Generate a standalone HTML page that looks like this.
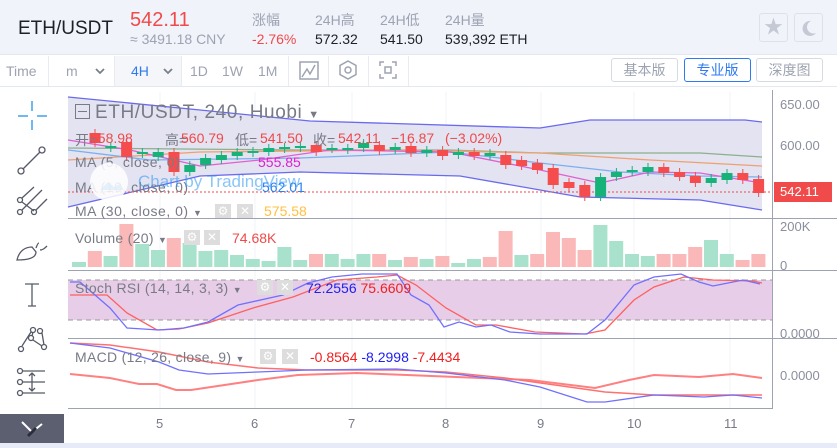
<!DOCTYPE html>
<html><head><meta charset="utf-8"><style>
*{margin:0;padding:0;box-sizing:border-box}
body{width:837px;height:448px;overflow:hidden;background:#fff;font-family:"Liberation Sans","Noto Sans CJK SC",sans-serif;position:relative}
.a{position:absolute;white-space:nowrap}
.g{color:#9ea3b2}
.r{color:#f04a4a}
.o{position:absolute;top:130px;font-size:14px;white-space:nowrap}
</style></head><body>
<div class="a" style="left:0;top:0;width:837px;height:55px;background:#f0f3fa;border-bottom:1px solid #e3e7f0"></div>
<div class="a" style="left:18px;top:18px;font-size:19px;color:#1e2026">ETH/USDT</div>
<div class="a" style="left:130px;top:9px;font-size:20px;color:#f04a4a">542.11</div>
<div class="a g" style="left:130px;top:31px;font-size:14px">≈ 3491.18 CNY</div>
<div class="a g" style="left:252px;top:10px;font-size:14px">涨幅</div>
<div class="a" style="left:252px;top:31px;font-size:14px;color:#f04a4a">-2.76%</div>
<div class="a g" style="left:315px;top:10px;font-size:14px">24H高</div>
<div class="a" style="left:315px;top:31px;font-size:14px;color:#1e2026">572.32</div>
<div class="a g" style="left:380px;top:10px;font-size:14px">24H低</div>
<div class="a" style="left:380px;top:31px;font-size:14px;color:#1e2026">541.50</div>
<div class="a g" style="left:445px;top:10px;font-size:14px">24H量</div>
<div class="a" style="left:445px;top:31px;font-size:14px;color:#1e2026">539,392 ETH</div>
<div class="a" style="left:759px;top:13px;width:29px;height:29px;border:1px solid #dde1ea;border-radius:3px;color:#c5c9d3;font-size:19px;text-align:center;line-height:27px">★</div>
<div class="a" style="left:794px;top:13px;width:29px;height:29px;border:1px solid #dde1ea;border-radius:3px"><svg width="27" height="27"><path d="M16 7a7.5 7.5 0 1 0 5 12a6.5 6.5 0 0 1 -5 -12z" fill="#c5c9d3"/></svg></div>

<div class="a" style="left:0;top:56px;width:837px;height:31px;border-bottom:1px solid #e3e7f0"></div>
<div class="a" style="left:114px;top:56px;width:67px;height:30px;background:#f4f6fa"></div>
<div class="a g" style="left:6px;top:63px;font-size:14px">Time</div>
<div class="a g" style="left:66px;top:63px;font-size:14px">m</div>
<div class="a" style="left:131px;top:63px;font-size:14px;color:#2e7bf0">4H</div>
<div class="a g" style="left:190px;top:63px;font-size:14px">1D</div>
<div class="a g" style="left:222px;top:63px;font-size:14px">1W</div>
<div class="a g" style="left:258px;top:63px;font-size:14px">1M</div>
<svg class="a" style="left:0;top:56px" width="420" height="31">
<g stroke="#e8ebf1"><line x1="48.5" y1="0" x2="48.5" y2="30"/><line x1="114.5" y1="0" x2="114.5" y2="30"/><line x1="181.5" y1="0" x2="181.5" y2="30"/><line x1="288.5" y1="0" x2="288.5" y2="30"/><line x1="328.5" y1="0" x2="328.5" y2="30"/><line x1="368.5" y1="0" x2="368.5" y2="30"/><line x1="408.5" y1="0" x2="408.5" y2="30"/></g>
<g fill="none" stroke="#7a7f8c" stroke-width="1.8"><path d="M96 13l4 4 4-4"/><path d="M164 13l4 4 4-4"/></g>
<g fill="none" stroke="#9ea3b2" stroke-width="1.5"><rect x="300" y="6" width="18" height="17"/><path d="M302 21l5-8 3 5 5-9"/>
<path d="M348 5l8 4.5v9l-8 4.5-8-4.5v-9z"/><circle cx="348" cy="14" r="3"/>
<path d="M380 10v-4h4M392 6h4v4M396 18v4h-4M384 22h-4v-4"/><rect x="385" y="11" width="6" height="6"/></g>
</svg>
<div class="a" style="left:611px;top:58px;width:67px;height:24px;border:1px solid #d6dae3;border-radius:3px;font-size:14px;color:#9ea3b2;text-align:center;line-height:22px">基本版</div>
<div class="a" style="left:684px;top:58px;width:67px;height:24px;border:1px solid #2e7bf0;border-radius:3px;font-size:14px;color:#2e7bf0;text-align:center;line-height:22px">专业版</div>
<div class="a" style="left:756px;top:58px;width:67px;height:24px;border:1px solid #d6dae3;border-radius:3px;font-size:14px;color:#9ea3b2;text-align:center;line-height:22px">深度图</div>

<svg class="a" style="left:0;top:88px" width="66" height="360">
<g stroke="#3ea0f0" stroke-width="1.5"><path d="M32 13v10M32 32v10M18 28h10M37 28h10"/></g>
<g fill="none" stroke="#555a66" stroke-width="1.3">
<circle cx="21" cy="83" r="3"/><circle cx="42" cy="62" r="3"/><path d="M23 81l17-17"/>
<circle cx="20" cy="112" r="2.5"/><circle cx="20" cy="124" r="2.5"/><circle cx="34" cy="124" r="2.5"/><path d="M22 110l12-11M22 122l20-20M36 122l11-11M22 114l12 9"/>
<path d="M17 172c2-9 8-13 15-13l4 5c0 5-5 8-19 8z"/><path d="M36 160c1-3 2-5 3-5M40 162c3 0 5-2 7-4"/>
<path d="M25 196h14M32 196v22M28 218h8"/>
<circle cx="33" cy="242" r="2.5"/><circle cx="40" cy="243" r="2.5"/><circle cx="31" cy="250" r="2.5"/><circle cx="21" cy="261" r="2.5"/><circle cx="44" cy="259" r="2.5"/><path d="M22 258l9-14M33 252l9 6M42 245l2 12M33 244l-1 4"/>
<circle cx="20" cy="283" r="2.5"/><circle cx="20" cy="294" r="2.5"/><circle cx="20" cy="305" r="2.5"/><path d="M23 283h22M23 294h22M23 305h22M32 285v18M29 288l3-3 3 3M29 300l3 3 3-3"/></g>
<rect x="0" y="326" width="64" height="29" fill="#5b5f70"/>
<path d="M22 334l10 10 10-8" stroke="#fff" stroke-width="2" fill="none"/>
<path d="M28 348l8-8" stroke="#2a2e3b" stroke-width="3"/>
</svg>
<div class="a" style="left:0;top:443px;width:837px;height:5px;background:#e6ebf7"></div>

<svg id="c" class="a" style="left:0;top:0" width="837" height="443"></svg>

<div class="a" style="left:75px;top:102px;font-size:19px;color:#787b86;letter-spacing:0.6px"><span style="display:inline-block;width:15px;height:15px;border:1.5px solid #787b86;vertical-align:-1px;position:relative;margin-right:5px"><span style="position:absolute;left:2px;right:2px;top:5.5px;height:1.5px;background:#787b86"></span></span>ETH/USDT, 240, Huobi <span style="font-size:11px">▼</span></div>
<div class="o" style="left:75px;color:#787b86">开=</div><div class="o r" style="left:90px">558.98</div>
<div class="o" style="left:165px;color:#787b86">高=</div><div class="o r" style="left:181px">560.79</div>
<div class="o" style="left:235px;color:#787b86">低=</div><div class="o r" style="left:260px">541.50</div>
<div class="o" style="left:313px;color:#787b86">收=</div><div class="o r" style="left:338px">542.11</div>
<div class="o r" style="left:391px">−16.87</div><div class="o r" style="left:445px">(−3.02%)</div>
<div class="a" style="left:75px;top:154px;font-size:14px;color:#787b86;letter-spacing:0.5px">MA (5, close, 0)</div>
<div class="a" style="left:258px;top:154px;font-size:14px;color:#e020d0">555.85</div>
<div class="a" style="left:75px;top:179px;font-size:14px;color:#787b86;letter-spacing:0.5px">MA (10, close, 0)</div>
<div class="a" style="left:262px;top:179px;font-size:14px;color:#2e80f0">562.01</div>
<div class="a" style="left:75px;top:203px;font-size:14px;color:#787b86;letter-spacing:0.5px">MA (30, close, 0) <span style="font-size:9px">▼</span></div>
<div class="a" style="left:264px;top:203px;font-size:14px;color:#ffc040">575.58</div>
<div class="a" style="left:215px;top:204px;width:16px;height:14px;background:#ddd;color:#fff;font-size:12px;text-align:center;line-height:14px">⚙</div>
<div class="a" style="left:237px;top:204px;width:16px;height:14px;background:#ddd;color:#fff;font-size:12px;text-align:center;line-height:14px">✕</div>
<div class="a" style="left:90px;top:163px;width:38px;height:38px;border-radius:50%;background:rgba(255,255,255,.85)"></div>
<div class="a" style="left:138px;top:172px;font-size:17px;color:rgba(40,150,240,.55)">Chart by TradingView</div>
<div class="a" style="left:75px;top:230px;font-size:14px;color:#787b86;letter-spacing:0.3px">Volume (20) <span style="font-size:9px">▼</span></div>
<div class="a" style="left:184px;top:230px;width:16px;height:15px;background:#ddd;color:#fff;font-size:12px;text-align:center">⚙</div>
<div class="a" style="left:204px;top:230px;width:16px;height:15px;background:#ddd;color:#fff;font-size:12px;text-align:center">✕</div>
<div class="a" style="left:232px;top:230px;font-size:14px;color:#f04a4a">74.68K</div>
<div class="a" style="left:75px;top:280px;font-size:14px;color:#787b86;letter-spacing:0.3px">Stoch RSI (14, 14, 3, 3) <span style="font-size:9px">▼</span></div>
<div class="a" style="left:257px;top:280px;width:16px;height:15px;background:#ddd;color:#fff;font-size:12px;text-align:center">⚙</div>
<div class="a" style="left:277px;top:280px;width:16px;height:15px;background:#ddd;color:#fff;font-size:12px;text-align:center">✕</div>
<div class="a" style="left:306px;top:280px;font-size:14px;color:#2020f0">72.2556 <span style="color:#f02020">75.6609</span></div>
<div class="a" style="left:75px;top:349px;font-size:14px;color:#787b86;letter-spacing:0.3px">MACD (12, 26, close, 9) <span style="font-size:9px">▼</span></div>
<div class="a" style="left:260px;top:349px;width:16px;height:15px;background:#ddd;color:#fff;font-size:12px;text-align:center">⚙</div>
<div class="a" style="left:282px;top:349px;width:16px;height:15px;background:#ddd;color:#fff;font-size:12px;text-align:center">✕</div>
<div class="a" style="left:310px;top:349px;font-size:14px;color:#f02020">-0.8564 <span style="color:#2020f0">-8.2998</span> -7.4434</div>

<div class="a" style="left:780px;top:97px;font-size:13px;color:#8a8f9e">650.00</div>
<div class="a" style="left:780px;top:138px;font-size:13px;color:#8a8f9e">600.00</div>
<div class="a" style="left:774px;top:182px;width:58px;height:20px;background:#f04a4a;color:#fff;font-size:13px;line-height:20px;padding-left:6px">542.11</div>
<div class="a" style="left:780px;top:219px;font-size:13px;color:#8a8f9e">200K</div>
<div class="a" style="left:780px;top:258px;font-size:13px;color:#8a8f9e">0</div>
<div class="a" style="left:780px;top:326px;font-size:13px;color:#8a8f9e">0.0000</div>
<div class="a" style="left:780px;top:368px;font-size:13px;color:#8a8f9e">0.0000</div>
<div class="a" style="left:156px;top:416px;font-size:13px;color:#787b86">5</div>
<div class="a" style="left:251px;top:416px;font-size:13px;color:#787b86">6</div>
<div class="a" style="left:348px;top:416px;font-size:13px;color:#787b86">7</div>
<div class="a" style="left:442px;top:416px;font-size:13px;color:#787b86">8</div>
<div class="a" style="left:537px;top:416px;font-size:13px;color:#787b86">9</div>
<div class="a" style="left:627px;top:416px;font-size:13px;color:#787b86">10</div>
<div class="a" style="left:724px;top:416px;font-size:13px;color:#787b86">11</div>

<script>
var s='';
function L(p,c,w,extra){s+='<polyline fill="none" stroke="'+c+'" stroke-width="'+(w||1.3)+'" '+(extra||'')+' points="'+p+'"/>';}
for(var x of [160,255,352,446,541,634,730]) s+='<line x1="'+x+'" y1="92" x2="'+x+'" y2="408" stroke="#f2f3f6"/>';
var up=[[68,97],[200,110],[310,121],[540,128],[590,120],[745,120],[762,122]];
var lo=[[762,210],[700,200],[580,197],[460,176],[300,172],[200,176],[68,207]];
s+='<polygon fill="#e3e3f2" points="'+up.concat(lo).map(p=>p.join(',')).join(' ')+'"/>';
L(up.map(p=>p.join(',')).join(' '),'#6a6aee',1.3);
L(lo.map(p=>p.join(',')).join(' '),'#6a6aee',1.3);
L('68,148 300,150 450,150 540,153 700,153 762,157','#8cb08c',1.3);
L('68,160 200,152 400,150 540,153 650,160 762,166','#f0a070',1.3);
L('68,150 150,160 300,158 450,152 540,163 620,172 700,176 762,177','#7ab0f0',1.3);
L('68,140 130,150 200,166 260,160 330,150 450,152 540,170 600,183 650,172 700,173 762,183','#e060d0',1.3);
s+='<line x1="68" y1="192" x2="772" y2="192" stroke="#f04a4a" stroke-dasharray="2,2"/>';
var C=[[133,143,0],[146,148,1],[142,157,0],[152,154,1],[152,157,1],[152,172,0],[165,172,1],[158,165,1],[155,160,1],[152,156,1],[151,153,1],[148,152,1],[147,149,1],[146,148,1],[145,152,0],[148,149,1],[148,150,1],[143,148,1],[145,151,0],[147,150,1],[146,153,0],[150,153,1],[150,156,0],[152,155,1],[152,156,0],[153,156,1],[155,165,0],[160,166,0],[163,170,0],[168,185,0],[182,188,0],[185,197,0],[177,197,1],[172,177,1],[170,172,1],[167,172,1],[167,173,0],[172,177,0],[176,183,0],[178,183,1],[173,180,1],[173,180,0],[179,193,0]];
C.forEach(function(c,i){var x=95+i*15.8,col=c[2]?'#16b27a':'#f54d4d';
s+='<line x1="'+x+'" y1="'+(c[0]-4)+'" x2="'+x+'" y2="'+(c[1]+4)+'" stroke="'+col+'"/>';
s+='<rect x="'+(x-5.5)+'" y="'+c[0]+'" width="11" height="'+Math.max(2,c[1]-c[0])+'" fill="'+col+'"/>';});
s+='<line x1="68" y1="218.5" x2="837" y2="218.5" stroke="#9ea3b2"/><line x1="68" y1="270.5" x2="837" y2="270.5" stroke="#9ea3b2"/><line x1="68" y1="338.5" x2="837" y2="338.5" stroke="#9ea3b2"/><line x1="68" y1="408.5" x2="772" y2="408.5" stroke="#9ea3b2"/><line x1="772.5" y1="90" x2="772.5" y2="409" stroke="#9ea3b2"/>';
var V=[[5,1],[16,0],[11,1],[43,0],[23,1],[17,1],[29,0],[24,1],[16,1],[17,1],[12,1],[8,1],[6,1],[20,1],[7,1],[13,0],[13,1],[8,1],[13,1],[13,0],[7,1],[10,0],[8,1],[11,0],[4,1],[8,1],[10,0],[36,0],[12,1],[13,0],[35,0],[29,0],[17,0],[42,1],[26,1],[13,1],[11,1],[13,0],[13,0],[20,0],[27,1],[13,1],[7,0],[13,0]];
V.forEach(function(v,i){var x=79+i*15.8;s+='<rect x="'+(x-7)+'" y="'+(267-v[0])+'" width="14" height="'+v[0]+'" fill="'+(v[1]?'#a8e2cd':'#fbb8b8')+'"/>';});
s+='<rect x="68" y="280" width="704" height="40" fill="#e8cde8"/>';
s+='<line x1="68" y1="280" x2="772" y2="280" stroke="#999" stroke-dasharray="5,4"/><line x1="68" y1="320" x2="772" y2="320" stroke="#999" stroke-dasharray="5,4"/>';
L('70,295 107,295 127,313 157,330 179,329 208,323 253,308 293,297 337,280 377,277 397,275 416,285 446,308 476,325 496,325 535,332 585,334 605,330 634,300 654,287 684,277 713,280 753,281 762,283','#ff6060');
L('70,282 80,282 110,308 127,328 159,330 184,328 208,322 238,305 283,295 308,283 332,277 362,274 397,274 411,295 429,305 444,327 459,322 476,327 491,325 510,332 540,334 587,334 605,320 634,285 654,277 681,274 699,282 713,286 743,280 760,284','#7070ff');
L('70,374 110,378 139,384 157,384 176,390 191,390 258,380 298,375 357,373 407,375 456,377 530,380 595,388 629,380 654,375 699,377 733,374 762,378','#ff8080',2);
L('70,343 110,345 159,352 208,362 258,368 308,370 397,370 446,372 505,378 555,385 605,392 654,395 762,395','#ff7070',1.5);
L('70,343 110,348 159,362 179,370 208,374 258,372 308,370 397,369 446,373 505,380 540,387 587,402 605,402 654,395 704,397 733,395 762,398','#7070ff',1.3);
s+='<path d="M100 190l8-8 6 5 6-3 4 6z" fill="#3aa0f0"/>';
document.getElementById('c').innerHTML=s;
</script>
</body></html>
